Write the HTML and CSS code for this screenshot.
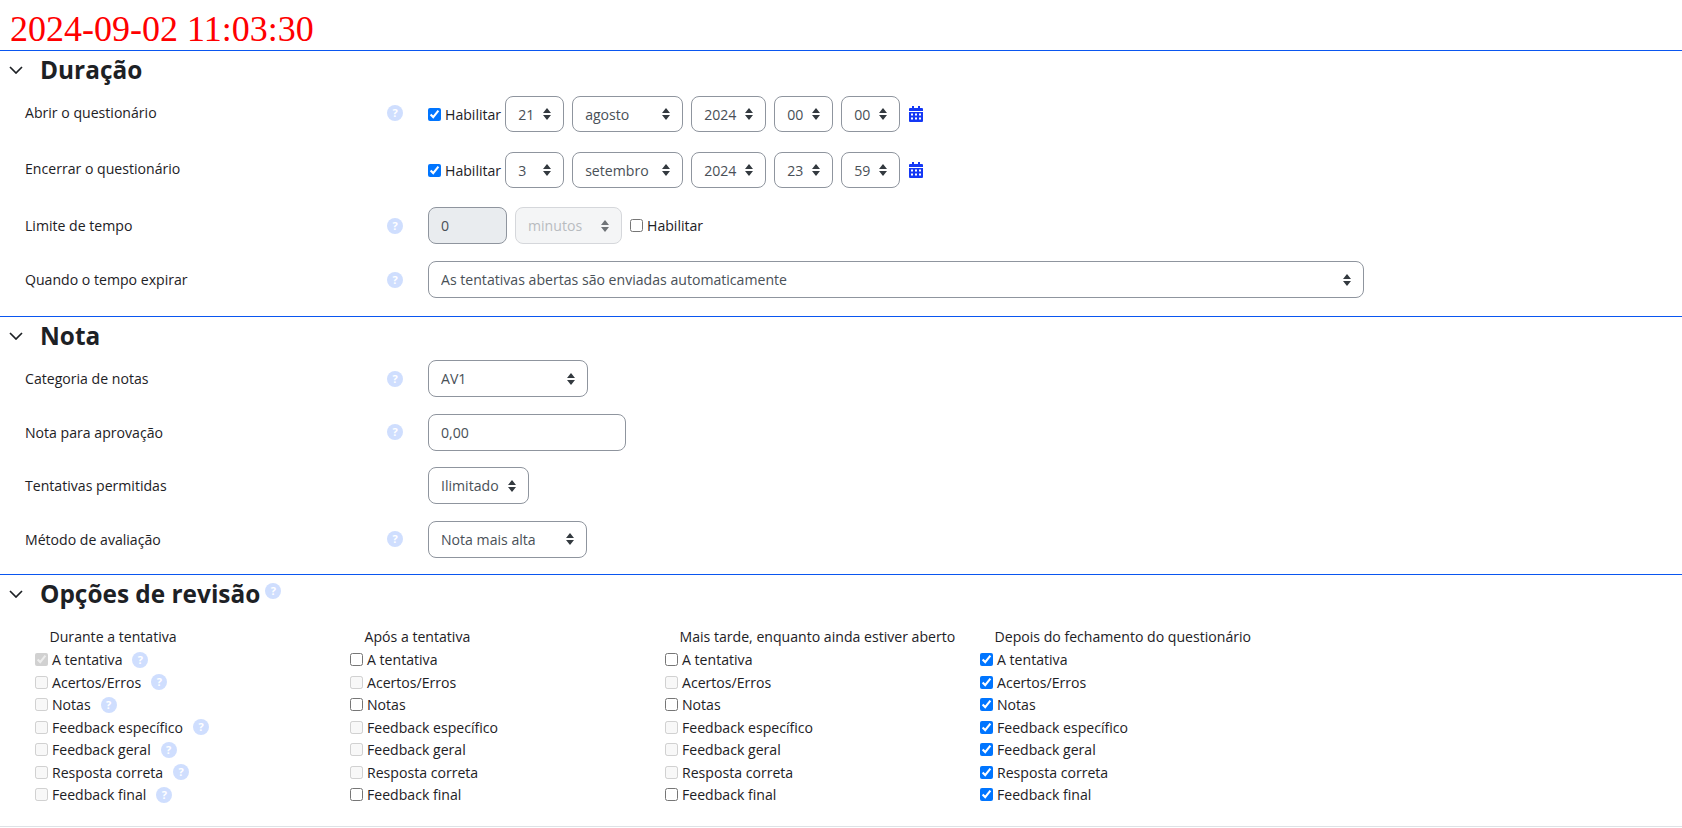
FILE: index.html
```html
<!DOCTYPE html>
<html lang="pt-BR">
<head>
    <meta charset="UTF-8">
    <title>Configurações do questionário</title>
    <link rel="stylesheet" href="styles.css">
</head>
<body>
    <div class="timestamp">2024-09-02 11:03:30</div>

    <section class="section section-time">
        <h3 class="section-title"><svg class="chevron" viewBox="0 0 14 8"><path d="M1 1l6 6 6-6"/></svg>Duração</h3>

        <div class="row row-date">
            <label class="row-label">Abrir o questionário</label>
            <div class="row-help"><span class="help">?</span></div>
            <div class="row-field">
                <label class="check"><input type="checkbox" checked>Habilitar</label>
                <select class="w-small"><option>21</option></select>
                <select class="w-month"><option>agosto</option></select>
                <select class="w-year"><option>2024</option></select>
                <select class="w-small"><option>00</option></select>
                <select class="w-small"><option>00</option></select>
                <svg class="calendar" viewBox="0 0 14 16"><path d="M3 0h2v2h4V0h2v2h2a1 1 0 0 1 1 1v2H0V3a1 1 0 0 1 1-1h2zM0 6h14v9a1 1 0 0 1-1 1H1a1 1 0 0 1-1-1zm2 1.5v2h2v-2zm4 0v2h2v-2zm4 0v2h2v-2zm-8 4v2h2v-2zm4 0v2h2v-2zm4 0v2h2v-2z" fill-rule="evenodd"/></svg>
            </div>
        </div>

        <div class="row row-date">
            <label class="row-label">Encerrar o questionário</label>
            <div class="row-help"></div>
            <div class="row-field">
                <label class="check"><input type="checkbox" checked>Habilitar</label>
                <select class="w-small"><option>3</option></select>
                <select class="w-month"><option>setembro</option></select>
                <select class="w-year"><option>2024</option></select>
                <select class="w-small"><option>23</option></select>
                <select class="w-small"><option>59</option></select>
                <svg class="calendar" viewBox="0 0 14 16"><path d="M3 0h2v2h4V0h2v2h2a1 1 0 0 1 1 1v2H0V3a1 1 0 0 1 1-1h2zM0 6h14v9a1 1 0 0 1-1 1H1a1 1 0 0 1-1-1zm2 1.5v2h2v-2zm4 0v2h2v-2zm4 0v2h2v-2zm-8 4v2h2v-2zm4 0v2h2v-2zm4 0v2h2v-2z" fill-rule="evenodd"/></svg>
            </div>
        </div>

        <div class="row">
            <label class="row-label">Limite de tempo</label>
            <div class="row-help"><span class="help">?</span></div>
            <div class="row-field">
                <input class="text w-time" type="text" value="0" disabled>
                <select class="w-unit" disabled><option>minutos</option></select>
                <label class="check"><input type="checkbox">Habilitar</label>
            </div>
        </div>

        <div class="row">
            <label class="row-label">Quando o tempo expirar</label>
            <div class="row-help"><span class="help">?</span></div>
            <div class="row-field">
                <select class="w-full"><option>As tentativas abertas são enviadas automaticamente</option></select>
            </div>
        </div>
    </section>

    <section class="section section-grade">
        <h3 class="section-title"><svg class="chevron" viewBox="0 0 14 8"><path d="M1 1l6 6 6-6"/></svg>Nota</h3>

        <div class="row">
            <label class="row-label">Categoria de notas</label>
            <div class="row-help"><span class="help">?</span></div>
            <div class="row-field"><select class="w-cat"><option>AV1</option></select></div>
        </div>
        <div class="row">
            <label class="row-label">Nota para aprovação</label>
            <div class="row-help"><span class="help">?</span></div>
            <div class="row-field"><input class="text w-grade" type="text" value="0,00"></div>
        </div>
        <div class="row">
            <label class="row-label">Tentativas permitidas</label>
            <div class="row-help"></div>
            <div class="row-field"><select class="w-attempts"><option>Ilimitado</option></select></div>
        </div>
        <div class="row">
            <label class="row-label">Método de avaliação</label>
            <div class="row-help"><span class="help">?</span></div>
            <div class="row-field"><select class="w-method"><option>Nota mais alta</option></select></div>
        </div>
    </section>

    <section class="section section-review">
        <h3 class="section-title"><svg class="chevron" viewBox="0 0 14 8"><path d="M1 1l6 6 6-6"/></svg>Opções de revisão<span class="help help-title">?</span></h3>

        <div class="review">
            <div class="review-col">
                <div class="review-head">Durante a tentativa</div>
                <label class="review-item"><input type="checkbox" checked disabled>A tentativa<span class="help">?</span></label>
                <label class="review-item"><input type="checkbox" disabled>Acertos/Erros<span class="help">?</span></label>
                <label class="review-item"><input type="checkbox" disabled>Notas<span class="help">?</span></label>
                <label class="review-item"><input type="checkbox" disabled>Feedback específico<span class="help">?</span></label>
                <label class="review-item"><input type="checkbox" disabled>Feedback geral<span class="help">?</span></label>
                <label class="review-item"><input type="checkbox" disabled>Resposta correta<span class="help">?</span></label>
                <label class="review-item"><input type="checkbox" disabled>Feedback final<span class="help">?</span></label>
            </div>
            <div class="review-col">
                <div class="review-head">Após a tentativa</div>
                <label class="review-item"><input type="checkbox">A tentativa</label>
                <label class="review-item"><input type="checkbox" disabled>Acertos/Erros</label>
                <label class="review-item"><input type="checkbox">Notas</label>
                <label class="review-item"><input type="checkbox" disabled>Feedback específico</label>
                <label class="review-item"><input type="checkbox" disabled>Feedback geral</label>
                <label class="review-item"><input type="checkbox" disabled>Resposta correta</label>
                <label class="review-item"><input type="checkbox">Feedback final</label>
            </div>
            <div class="review-col">
                <div class="review-head">Mais tarde, enquanto ainda estiver aberto</div>
                <label class="review-item"><input type="checkbox">A tentativa</label>
                <label class="review-item"><input type="checkbox" disabled>Acertos/Erros</label>
                <label class="review-item"><input type="checkbox">Notas</label>
                <label class="review-item"><input type="checkbox" disabled>Feedback específico</label>
                <label class="review-item"><input type="checkbox" disabled>Feedback geral</label>
                <label class="review-item"><input type="checkbox" disabled>Resposta correta</label>
                <label class="review-item"><input type="checkbox">Feedback final</label>
            </div>
            <div class="review-col">
                <div class="review-head">Depois do fechamento do questionário</div>
                <label class="review-item"><input type="checkbox" checked>A tentativa</label>
                <label class="review-item"><input type="checkbox" checked>Acertos/Erros</label>
                <label class="review-item"><input type="checkbox" checked>Notas</label>
                <label class="review-item"><input type="checkbox" checked>Feedback específico</label>
                <label class="review-item"><input type="checkbox" checked>Feedback geral</label>
                <label class="review-item"><input type="checkbox" checked>Resposta correta</label>
                <label class="review-item"><input type="checkbox" checked>Feedback final</label>
            </div>
        </div>
    </section>
</body>
</html>
```

FILE: styles.css
```css
html, body {
    height: 828px;
    overflow: hidden;
}
body {
    margin: 0;
    font-family: "Open Sans", "Noto Sans", Arial, sans-serif;
    font-size: 14.1px;
    color: #1d2125;
    background: #fff;
}
.timestamp {
    height: 50px;
    padding-left: 10px;
    font-family: "Liberation Serif", serif;
    font-size: 36px;
    line-height: 58px;
    color: #f00;
}
.section {
    border-top: 1px solid #0a56f0;
}
.section-title {
    display: flex;
    align-items: center;
    height: 37px;
    font-size: 24.4px;
    font-weight: 700;
    margin: 0;
}
.section-time .section-title {
    margin-bottom: 8px;
}
.section-time .row {
    margin-bottom: 18px;
}
.section-time .row:nth-of-type(1) {
    margin-bottom: 20px;
}
.section-time .row:nth-of-type(2) {
    margin-bottom: 19px;
}
.section-time .row:nth-of-type(3) {
    margin-bottom: 17px;
}
.section-grade .section-title {
    margin-bottom: 6px;
}
.section-grade .row {
    margin-bottom: 16.5px;
}
.section-review {
    height: 251px;
    border-bottom: 1px solid #dee2e6;
}
.section-review .section-title {
    margin-bottom: 14px;
}
.chevron {
    width: 14px;
    height: 8px;
    margin: 0 17px 0 9px;
    fill: none;
    stroke: #1d2125;
    stroke-width: 1.7;
}

.row {
    display: flex;
    align-items: center;
    height: 37px;
}
.row-date {
    height: 36px;
}
.row-label {
    width: 362px;
    padding-left: 25px;
}
.row-date .row-label,
.row-date .row-help {
    margin-top: -3px;
}
.row-help {
    width: 41px;
    height: 16px;
}
.row-help .help {
    display: block;
}
.row-field {
    display: flex;
    align-items: center;
    gap: 8px;
}
.help {
    display: inline-block;
    width: 16px;
    height: 16px;
    border-radius: 50%;
    background: #cfdefe;
    color: #fff;
    font-size: 11px;
    font-weight: 700;
    line-height: 16px;
    text-align: center;
}
.help-title {
    margin: -6px 0 0 5px;
}

.check {
    display: flex;
    align-items: center;
    margin-right: -4px;
}
.check input {
    margin: 0 4px 0 0;
}

select, .text {
    height: 37px;
    box-sizing: border-box;
    border: 1px solid #8f959e;
    border-radius: 8px;
    background-color: #fff;
    color: #495057;
    font-family: inherit;
    font-size: 14.1px;
    padding: 0 12px;
}
.row-date select {
    height: 36px;
}
select {
    appearance: none;
    background-image: url("data:image/svg+xml,%3Csvg xmlns='http://www.w3.org/2000/svg' viewBox='0 0 8 12'%3E%3Cpath d='M4 0l4 5H0zM4 12L0 7h8z' fill='%23343a40'/%3E%3C/svg%3E");
    background-repeat: no-repeat;
    background-size: 8px 12px;
    background-position: right 12px center;
}
select:disabled {
    background-color: #f0f1f3;
    border-color: #c4c7cc;
    color: #9a9fa5;
}
.text:disabled {
    background: #e9ecef;
}
.w-small { width: 59px; }
.w-month { width: 111px; }
.w-year { width: 75px; }
.w-time { width: 79px; }
.w-unit { width: 107px; }
.w-full { width: 936px; }
.w-cat { width: 160px; }
.w-grade { width: 198px; }
.w-attempts { width: 101px; }
.w-method { width: 159px; }
.calendar {
    width: 14px;
    height: 16px;
    margin-left: 1px;
    fill: #1438f5;
}

.review {
    display: grid;
    grid-template-columns: repeat(4, 315px);
    padding-left: 35px;
}
.review-head {
    padding-left: 14.5px;
    height: 22.5px;
    line-height: 22.5px;
}
.review-item {
    display: flex;
    align-items: center;
    height: 22.5px;
}
.review-item input {
    margin: 0 4px 0 0;
}
.review-item .help {
    margin-left: 10px;
}
```
